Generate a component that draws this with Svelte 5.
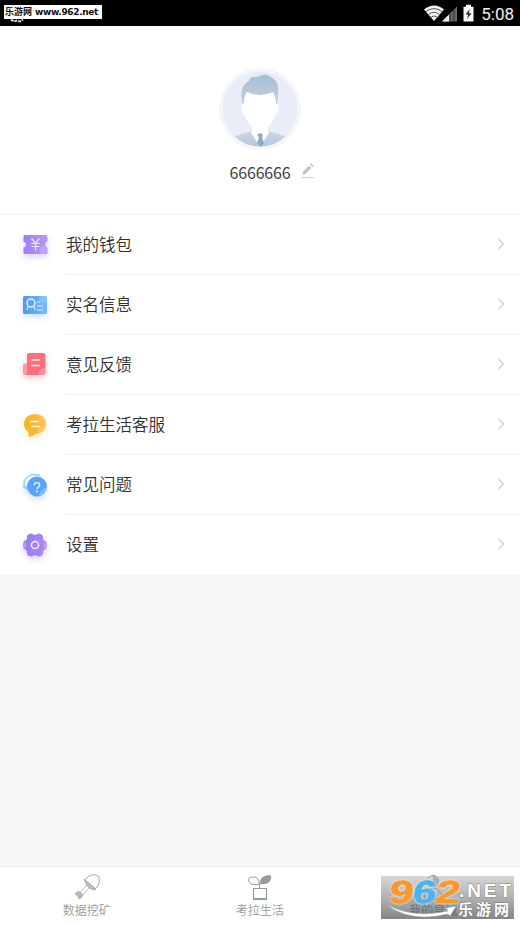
<script lang="ts">
  const menu = [
    { icon: 'wallet', label: '我的钱包' },
    { icon: 'identity', label: '实名信息' },
    { icon: 'feedback', label: '意见反馈' },
    { icon: 'service', label: '考拉生活客服' },
    { icon: 'faq', label: '常见问题' },
    { icon: 'settings', label: '设置' }
  ];

  const tabs = [
    { icon: 'shovel', label: '数据挖矿' },
    { icon: 'plant', label: '考拉生活' },
    { icon: 'person', label: '我的皇城', active: true }
  ];
</script>

<div class="screen">
  <header class="statusbar">
    <svg class="notice" width="20" height="8" viewBox="0 0 20 8" aria-hidden="true">
      <path d="M3 4.5l3 2 3-1 3 1 3-2" fill="none" stroke="#ddd" stroke-width="2" stroke-dasharray="3 1" />
    </svg>
    <div class="site"><span>乐游网</span><b>www.962.net</b></div>
    <svg class="signals" width="54" height="20" viewBox="0 0 54 20" aria-hidden="true">
      <path d="M1 6.5Q11 -1.5 21 6.5L11 18Z" fill="#f5f5f5" />
      <path d="M3 8.6Q11 2.6 19 8.6M5.5 11.4Q11 7.2 16.5 11.4M8 14Q11 11.8 14 14" fill="none" stroke="#444" stroke-width=".9" />
      <path d="M19 18.5L34 3.5V18.5Z" fill="#666" />
      <path d="M19 18.5L26 11.5V18.5Z" fill="#eee" />
      <path d="M27 10v9M31 6v13" stroke="#333" />
      <path d="M40.5 3.8H43V1.8h5v2h2.5V18.5h-10Z" fill="#f8f8f8" />
      <path d="M46.8 6l-4.3 5.4h2.8l-1.3 4.6 4.6-5.8h-3Z" fill="#222" />
    </svg>
    <span class="time">5:08</span>
  </header>

  <section class="profile">
    <svg width="84" height="84" viewBox="0 0 84 84" aria-hidden="true">
      <defs>
        <linearGradient id="hair" x1="0" y1="0" x2="0" y2="1">
          <stop offset="0" stop-color="#a9bfd4" />
          <stop offset="1" stop-color="#c3d2e3" />
        </linearGradient>
        <linearGradient id="suit" x1="0" y1="0" x2="0" y2="1">
          <stop offset="0" stop-color="#cbd6e5" />
          <stop offset="1" stop-color="#b3c6dc" />
        </linearGradient>
        <clipPath id="face-clip"><circle cx="42" cy="42" r="37.5" /></clipPath>
      </defs>
      <circle cx="42" cy="42" r="41" fill="#f5f6f8" />
      <g clip-path="url(#face-clip)">
        <circle cx="42" cy="42" r="38" fill="#e8edf7" />
        <path d="M13 82V72Q18 68 34 64L42 68L50 64Q66 68 71 72V82Z" fill="url(#suit)" />
        <path d="M35 59L33 66L40 77L42 70L44 77L51 66L49 59Z" fill="#f4f8fd" />
        <path d="M25 40Q22 29 24 23Q25 17 31 14Q32 9 39 10Q47 5 53 10Q59 13 60 20Q61 30 58 40Z" fill="url(#hair)" />
        <path d="M26 36Q26 28 29 25Q42 31 55 25Q58 29 58 37Q62 37 60 43Q59 48 57.5 48Q55 56 49 61Q46 64 42 64T35 61Q29 56 26.5 48Q24 48 23.5 42Q23 37 26 36Z" fill="#fff" />
        <path d="M35 60L34 67L38 71L42 66L46 71L50 67L49 60Q42 66 35 60Z" fill="#fff" />
        <path d="M39.5 67.5L42 66L45 67.5L44 71L46 76L43 80L39 76L41 71Z" fill="#8ba7ca" />
      </g>
    </svg>
    <div class="name">
      <span>6666666</span>
      <svg width="15" height="17" viewBox="0 0 15 17" aria-hidden="true">
        <path d="M2 13L3 9.5L9 3.5L11.5 6L5.5 12Z M10 2.5L11.3 1.2L13.8 3.7L12.5 5Z" fill="#c5c5c5" />
        <path d="M1 15.5H14" stroke="#d2d2d2" />
      </svg>
    </div>
  </section>

  <nav class="menu">
    {#each menu as item}
      <a class="row" href="#{item.icon}">
        <svg class="icon {item.icon}" width="30" height="30" viewBox="0 0 30 30" aria-hidden="true">
          {#if item.icon === 'wallet'}
            <defs>
              <linearGradient id="wallet-fill" x1="0" x2="1"><stop stop-color="#9b83f1" /><stop offset="1" stop-color="#b69aef" /></linearGradient>
            </defs>
            <path d="M4.5 5H26Q27.5 5 27.5 6.5V11.5Q25 12 25 14.5T27.5 17.5V22.5Q27.5 24 26 24H5Q3.5 24 3.5 22.5V17.5Q6 17 6 14.5T3.5 11.5V6.5Q3.5 5 4.5 5Z" fill="url(#wallet-fill)" />
            <circle cx="23.3" cy="20.2" r="3.8" fill="#c9a8f6" opacity=".8" />
            <path d="M11.5 8.5L15.5 13L19.5 8.5M15.5 13V20.5M11.5 13.5H19.5M11.5 16.5H19.5" fill="none" stroke="#eee5ff" stroke-width="1.2" />
          {:else if item.icon === 'identity'}
            <defs>
              <linearGradient id="identity-fill" x1="0" x2="1"><stop stop-color="#519be9" /><stop offset="1" stop-color="#76bcfb" /></linearGradient>
            </defs>
            <rect x="3" y="6" width="24" height="18" rx="1.5" fill="url(#identity-fill)" />
            <circle cx="23" cy="9.5" r="3.5" fill="#91cbff" opacity=".6" />
            <circle cx="11" cy="13" r="4" fill="none" stroke="#e6f5ff" stroke-width="1.4" />
            <path d="M8.5 16L7 20M13.5 16L15.5 20M17 12h3M17 16h6M17 20h6" fill="none" stroke="#d8efff" stroke-width="1.2" />
          {:else if item.icon === 'feedback'}
            <path d="M3 15Q3 13.5 5 13.5H8V25H5Q3 25 3 23Z" fill="#f99ba5" />
            <path d="M7 5Q7 3 9 3H23Q25.5 3 25.5 5V22Q25.5 25 22 25H5Q7 24.5 7 22Z" fill="#fb6f7d" />
            <path d="M18 25Q18 18 25.5 18V22Q25.5 25 22 25Z" fill="#ff9fa6" opacity=".7" />
            <path d="M11.5 10H20M11.5 15.5H20" stroke="#fff1f2" stroke-width="1.7" />
          {:else if item.icon === 'service'}
            <defs>
              <linearGradient id="service-fill"><stop stop-color="#f9ae27" /><stop offset="1" stop-color="#fac35b" /></linearGradient>
            </defs>
            <path d="M15 4C22 4 26 8 26 14S21 24 15 24Q12 27 8.5 26.5Q9.5 24.5 8 21.5Q4 18.5 4 14C4 8 9 4 15 4Z" fill="url(#service-fill)" />
            <path d="M18 23Q17 17 26 15Q25 21 18 23Z" fill="#ffd06d" opacity=".7" />
            <path d="M10 11.5H18.5M11.5 16.5H20" stroke="#fff7dc" stroke-width="1.7" />
          {:else if item.icon === 'faq'}
            <path d="M4.5 18Q2.5 10 8 6.5Q13 3 20 5.5" fill="none" stroke="#9bcefa" stroke-width="1.4" />
            <path d="M2 16.5L7 20.5L7 16Z" fill="#9bcefa" />
            <circle cx="17" cy="16.5" r="10" fill="#5ba4f4" />
            <path d="M19 26.3Q19 20 27 17Q26 24 19 26.3Z" fill="#9bcfff" opacity=".6" />
            <path d="M14.3 15.2Q14.3 12.6 17 12.6T19.7 15.2Q19.7 16.6 18 17.3Q17 18 17 19.3" fill="none" stroke="#ecf6ff" stroke-width="1.3" />
            <circle cx="17" cy="21.5" r=".9" fill="#ecf6ff" />
          {:else}
            <defs>
              <linearGradient id="settings-fill"><stop stop-color="#957ce8" /><stop offset="1" stop-color="#b08af2" /></linearGradient>
            </defs>
            <path d="M4 11Q6.5 11 7 8.5V6Q8.5 3.5 11 3.5L15 5L19 3.5Q21.5 3.5 23 6V8.5Q23.5 11 26 11Q28 15 26 19Q23.5 19 23 21.5V24Q21.5 26.5 19 26.5L15 25L11 26.5Q8.5 26.5 7 24V21.5Q6.5 19 4 19Q2 15 4 11Z" fill="url(#settings-fill)" />
            <path d="M4 11Q6.5 12 6.5 15T4 19Q2 15 4 11ZM26 11Q23.5 12 23.5 15T26 19Q28 15 26 11Z" fill="#cbb5ff" opacity=".5" />
            <circle cx="15" cy="15" r="3.6" fill="none" stroke="#f2eaff" stroke-width="1.5" />
          {/if}
        </svg>
        <span class="line">
          <span>{item.label}</span>
          <svg width="8" height="12" viewBox="0 0 8 12" aria-hidden="true">
            <path d="M1.5 1L6.5 6L1.5 11" fill="none" stroke="#ccc" stroke-width="1.1" />
          </svg>
        </span>
      </a>
    {/each}
  </nav>

  <main></main>

  <footer class="tabbar">
    {#each tabs as tab}
      <div class="tab" class:active={tab.active}>
        <svg width="30" height="30" viewBox="0 0 30 30" aria-hidden="true">
          {#if tab.icon === 'shovel'}
            <path d="M12.5 8L17 4Q23 1 27 5Q28 10 26 14L23 17Z" fill="#fff" stroke="#aaa" />
            <path d="M12.5 7.5L24 17L22 18Q14 16 12.5 7.5Z" fill="#bbb" stroke="#aaa" />
            <path d="M15 13L8 20.5M17.5 15.5L10.5 23" fill="none" stroke="#bbb" />
            <path d="M3 22Q6 18 8 20L11 23Q10 26 7 27Q7 24 3 22Z" fill="#bbb" stroke="#b3b3b3" />
          {:else if tab.icon === 'plant'}
            <path d="M14.5 18V12Q14 5 8 5Q2 5 4 10Q7 14 14.5 12" fill="none" stroke="#999" />
            <path d="M15 12Q14 4 24 3Q28 3 25 9Q22 13 15 12Z" fill="#999" />
            <path d="M8.5 16.5H21.5V26.5H8.5Z" fill="#fff" stroke="#999" />
            <path d="M8 27H22" stroke="#999" stroke-width="2" />
          {:else}
            <circle cx="15" cy="9" r="5.5" fill="none" stroke="#79a" />
            <path d="M15 3.5A5.5 5.5 0 0 1 19 13L15 9Z" fill="#87aabc" />
            <path d="M6 27Q7 16 15 16T24 27Z" fill="none" stroke="#79a" />
          {/if}
        </svg>
        <span>{tab.label}</span>
      </div>
    {/each}
    <svg class="watermark" width="133" height="43" viewBox="0 0 133 43" role="img" aria-label="962.NET 乐游网">
      <defs>
        <linearGradient id="mark-bg" x1="0" y1="0" x2="0" y2="1">
          <stop stop-color="#bbb" stop-opacity=".6" />
          <stop offset="1" stop-color="#555" stop-opacity=".72" />
        </linearGradient>
      </defs>
      <rect width="133" height="43" fill="url(#mark-bg)" />
      <g class="digits">
        <text transform="translate(7 26.5) skewX(-8)" textLength="24" lengthAdjust="spacingAndGlyphs" fill="#f8982e" stroke="#f8982e">9</text>
        <text transform="translate(31 26.5) skewX(-8)" textLength="23" lengthAdjust="spacingAndGlyphs" fill="#4eb3ea" stroke="#4eb3ea">6</text>
        <text transform="translate(54 26.5) skewX(-8)" textLength="24" lengthAdjust="spacingAndGlyphs" fill="#f8982e" stroke="#f8982e">2</text>
      </g>
      <text class="net" x="78" y="21" textLength="52" lengthAdjust="spacing">.NET</text>
      <path d="M6 29Q34 43 67 35L65 32L75 30L69 40L67 38Q30 47 6 29Z" fill="#fff" stroke="#aaa" stroke-width=".5" />
      <text class="cn" x="77" y="38.5" textLength="51">乐游网</text>
    </svg>
  </footer>
</div>

<style>
  :global(body) {
    background: #f7f7f7;
  }
  .screen {
    display: flex;
    flex-direction: column;
    width: 520px;
    height: 925px;
    overflow: hidden;
    background: #f7f7f7;
    color: #303030;
    font-family: 'Noto Sans CJK SC', sans-serif;
  }
  svg {
    display: block;
    flex: none;
  }
  .statusbar {
    position: relative;
    display: flex;
    align-items: center;
    flex: none;
    box-sizing: border-box;
    height: 26px;
    padding: 0 6px 0 4px;
    background: #000;
  }
  .notice {
    position: absolute;
    left: 8px;
    top: 15px;
  }
  .site {
    position: relative;
    display: flex;
    align-items: center;
    gap: 3px;
    box-sizing: border-box;
    width: 98px;
    height: 14px;
    margin-bottom: 2px;
    padding-left: 1px;
    background: #fff;
    color: #111;
    font-size: 9px;
    font-weight: 700;
    line-height: 14px;
    white-space: nowrap;
  }
  .site b {
    font: 700 9px/14px 'DejaVu Sans', sans-serif;
    letter-spacing: -0.35px;
  }
  .signals {
    margin-left: auto;
    margin-bottom: 1px;
  }
  .time {
    width: 34px;
    margin-left: 3px;
    padding-top: 1px;
    color: #f3f3f3;
    font: 17px/26px Roboto, sans-serif;
    text-align: right;
  }
  .profile {
    display: flex;
    flex-direction: column;
    align-items: center;
    flex: none;
    box-sizing: border-box;
    height: 189px;
    padding-top: 41px;
    border-bottom: 1px solid #eee;
    background: #fff;
  }
  .name {
    display: flex;
    align-items: center;
    gap: 9px;
    margin: 9px 0 0 24px;
    color: #3b4048;
    font-size: 16px;
    letter-spacing: -0.15px;
    line-height: 24px;
  }
  .name svg {
    margin-bottom: 3px;
  }
  .menu {
    flex: none;
    background: #fff;
  }
  .row {
    display: flex;
    align-items: center;
    height: 60px;
    padding-left: 20px;
    color: inherit;
    text-decoration: none;
  }
  .icon {
    margin-right: 15px;
  }
  .wallet, .settings {
    filter: drop-shadow(0 3px 3px #9573ff55);
  }
  .identity, .faq {
    filter: drop-shadow(0 3px 3px #58a8ff55);
  }
  .feedback {
    filter: drop-shadow(0 3px 3px #ff657455);
  }
  .service {
    filter: drop-shadow(0 3px 3px #ffc44155);
  }
  .line {
    display: flex;
    align-items: center;
    justify-content: space-between;
    flex: 1;
    box-sizing: border-box;
    height: 60px;
    padding: 0 15px 2px 1px;
    border-bottom: 1px solid #f0f0f0;
    font-size: 16.5px;
    font-weight: 350;
    line-height: 24px;
  }
  .row:last-child .line {
    border-bottom-color: transparent;
  }
  main {
    flex: 1;
  }
  .tabbar {
    position: relative;
    display: flex;
    flex: none;
    box-sizing: border-box;
    height: 59px;
    border-top: 1px solid #e9e9e9;
    background: #fff;
  }
  .tab {
    display: flex;
    flex-direction: column;
    align-items: center;
    flex: 1;
    padding-top: 5px;
    color: #999;
    font-size: 12px;
    font-weight: 350;
    line-height: 16px;
  }
  .active {
    color: #2680bb;
    font-weight: 400;
  }
  .watermark {
    position: absolute;
    left: 381px;
    top: 9px;
    overflow: visible;
  }
  .digits {
    font: 700 32px 'Liberation Sans', sans-serif;
    stroke-width: 0.8px;
    filter: drop-shadow(0 0 1px #fff);
  }
  .net {
    fill: #fff;
    stroke: #888;
    stroke-width: 1px;
    paint-order: stroke;
    font: 700 19px 'Liberation Sans', sans-serif;
  }
  .cn {
    fill: #fff;
    stroke: #777;
    stroke-width: 1px;
    paint-order: stroke;
    font: 700 15px 'Noto Sans CJK SC', sans-serif;
  }
</style>
